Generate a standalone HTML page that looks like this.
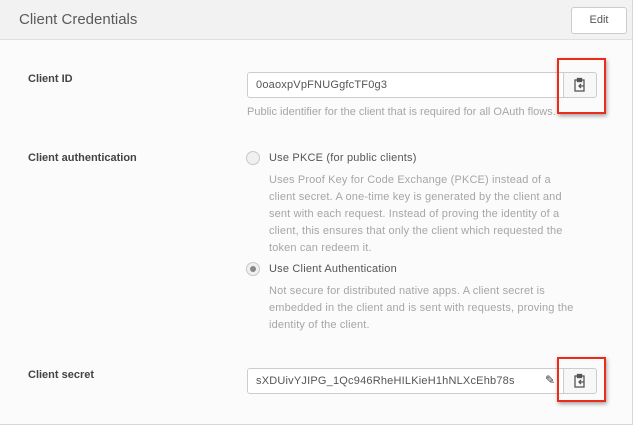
<!DOCTYPE html>
<html><head><style>
*{margin:0;padding:0;box-sizing:border-box}
body{width:636px;height:432px;background:#fff;font-family:"Liberation Sans",sans-serif;position:relative;overflow:hidden}
.card{position:absolute;left:0;top:0;width:633px;height:425px;border:1px solid #d8d8d8;border-left:none;border-top:none;background:#fbfbfb}
.hdr{position:absolute;left:0;top:0;width:632px;height:40px;background:#f2f2f2;border-bottom:1px solid #e0e0e0}
.t{position:absolute;white-space:nowrap}
.lbl{font-size:11px;font-weight:bold;color:#444}
.inp{position:absolute;height:26px;border:1px solid #ccc;border-radius:3px 0 0 3px;background:#fff;font-size:11px;color:#555;padding:6px 8px;letter-spacing:0.2px}
.btn{position:absolute;width:34px;height:26px;border:1px solid #ccc;border-radius:0 3px 3px 0;background:#f7f7f7}
.red{position:absolute;border:2px solid #ee2b1b;box-shadow:1px 2px 4px rgba(0,0,0,.35)}
.help{font-size:11px;color:#a6a6a6;line-height:17px;letter-spacing:0.15px}
.radio{position:absolute;width:14px;height:14px;border-radius:50%;border:1px solid #c8c8c8;background:#f0f0f0}
</style></head><body>
<div class="card"></div>
<div class="hdr"></div>
<div class="t" style="left:19px;top:11px;font-size:15px;color:#5a5a5a">Client Credentials</div>
<div style="position:absolute;left:571px;top:7px;width:56px;height:27px;border:1px solid #ccc;border-radius:3px;background:#fff;font-size:11px;color:#555;text-align:center;line-height:25px">Edit</div>

<div class="t lbl" style="left:28px;top:73px">Client ID</div>
<div class="inp" style="left:247px;top:72px;width:317px">0oaoxpVpFNUGgfcTF0g3</div>
<div class="btn" style="left:563px;top:72px"><svg width="32" height="24" viewBox="0 0 32 24"><g fill="none" stroke="#555" stroke-width="1.3"><rect x="11" y="7" width="9" height="11"/><rect x="13.5" y="5.5" width="4" height="3" fill="#555"/><path d="M20 13h-5m2-2l-2 2 2 2"/></g></svg></div>
<div class="red" style="left:557px;top:58px;width:49px;height:56px"></div>
<div class="t help" style="left:247px;top:104px;letter-spacing:0">Public identifier for the client that is required for all OAuth flows.</div>

<div class="t lbl" style="left:28px;top:152px">Client authentication</div>
<div class="radio" style="left:246px;top:151px"></div>
<div class="t" style="left:269px;top:152px;font-size:11px;color:#555;letter-spacing:0.2px">Use PKCE (for public clients)</div>
<div class="t help" style="left:269px;top:172px;white-space:normal;width:310px">Uses Proof Key for Code Exchange (PKCE) instead of a client secret. A one-time key is generated by the client and sent with each request. Instead of proving the identity of a client, this ensures that only the client which requested the token can redeem it.</div>
<div class="radio" style="left:246px;top:262px"><div style="position:absolute;left:3px;top:3px;width:6px;height:6px;border-radius:50%;background:#888"></div></div>
<div class="t" style="left:269px;top:263px;font-size:11px;color:#555;letter-spacing:0.2px">Use Client Authentication</div>
<div class="t help" style="left:269px;top:283px;white-space:normal;width:310px">Not secure for distributed native apps. A client secret is embedded in the client and is sent with requests, proving the identity of the client.</div>

<div class="t lbl" style="left:28px;top:369px">Client secret</div>
<div class="inp" style="left:247px;top:368px;width:317px">sXDUivYJIPG_1Qc946RheHILKieH1hNLXcEhb78s</div>
<div class="t" style="left:545px;top:373px;font-size:12px;color:#333">&#9998;</div>
<div class="btn" style="left:563px;top:368px"><svg width="32" height="24" viewBox="0 0 32 24"><g fill="none" stroke="#555" stroke-width="1.3"><rect x="11" y="7" width="9" height="11"/><rect x="13.5" y="5.5" width="4" height="3" fill="#555"/><path d="M20 13h-5m2-2l-2 2 2 2"/></g></svg></div>
<div class="red" style="left:557px;top:357px;width:49px;height:45px"></div>
</body></html>
